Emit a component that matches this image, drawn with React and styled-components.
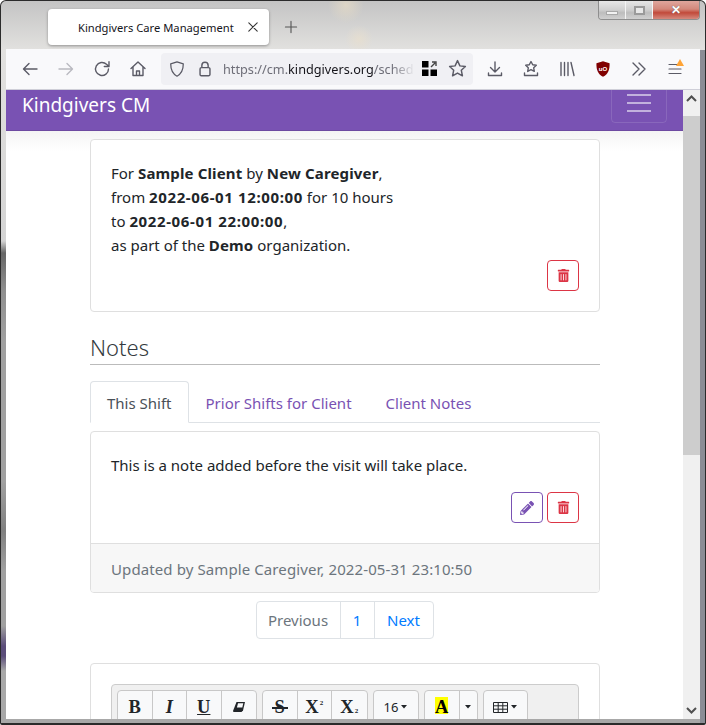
import React from 'react';
import styled, { createGlobalStyle } from 'styled-components';
import { FaTrashAlt, FaPencilAlt } from 'react-icons/fa';

const uiFont = `'Noto Sans', 'Open Sans', Arial, sans-serif`;

const GlobalStyle = createGlobalStyle`
  html, body {
    margin: 0;
    padding: 0;
    width: 706px;
    height: 725px;
    overflow: hidden;
    background: #fff;
  }
  * {
    box-sizing: border-box;
  }
`;

function Ico({ size = 20, children }) {
  return (
    <svg
      width={size}
      height={size}
      viewBox="0 0 20 20"
      fill="none"
      stroke="#5b5b66"
      strokeWidth="1.4"
      strokeLinecap="round"
      strokeLinejoin="round"
    >
      {children}
    </svg>
  );
}

function Caret() {
  return (
    <svg width="6" height="4" viewBox="0 0 6 4">
      <path d="M0 0h6L3 3.500z" fill="#212529" />
    </svg>
  );
}

function TableIcon() {
  return (
    <svg width="15" height="11" viewBox="0 0 15 11" fill="none" stroke="#212529">
      <path d="M.5.500h14v10H.5zM.5 3.800h14M.5 7.200h14M5.200.500v10M9.800.500v10" />
    </svg>
  );
}

function EraserIcon() {
  return (
    <svg width="12" height="10" viewBox="0 0 12 10">
      <path d="M3.500 0H12L10 8.500 8.500 10H0.500L0 9z" fill="#212529" />
      <path d="M5 1.300h5.300L9.300 5.600H3.900z" fill="#f8f9fa" />
    </svg>
  );
}

function NoteCard({ children, canEdit, footer }) {
  return (
    <Card>
      <CardBody>
        {children}
        <ActionRow>
          {canEdit && (
            <IconButton $color="#7952b3">
              <FaPencilAlt size={14} />
            </IconButton>
          )}
          <IconButton $color="#dc3545">
            <FaTrashAlt size={13} />
          </IconButton>
        </ActionRow>
      </CardBody>
      {footer && <CardFooter>{footer}</CardFooter>}
    </Card>
  );
}

export default function App() {
  return (
    <Window>
      <GlobalStyle />
      <TitleBar>
        <Tab>
          <TabTitle>Kindgivers Care Management</TabTitle>
          <Ico size={12}>
            <path d="M3 3l14 14M17 3L3 17" strokeWidth="1.800" stroke="#333" />
          </Ico>
        </Tab>
        <NewTab>
          <Ico size={14}>
            <path d="M10 2v16M2 10h16" stroke="#555" strokeWidth="1.600" />
          </Ico>
        </NewTab>
        <WinControls>
          <WinButton $w={27}>
            <MinGlyph />
          </WinButton>
          <WinButton $w={27}>
            <MaxGlyph />
          </WinButton>
          <WinButton $w={46} $close>
            <CloseGlyph>✕</CloseGlyph>
          </WinButton>
        </WinControls>
      </TitleBar>

      <Toolbar>
        <NavCell>
          <Ico>
            <path d="M17 10H4M9 4.500L3.500 10 9 15.500" />
          </Ico>
        </NavCell>
        <NavCell>
          <Ico>
            <g stroke="#b9b9c0">
              <path d="M3 10h13M11 4.500l5.500 5.500-5.500 5.500" />
            </g>
          </Ico>
        </NavCell>
        <NavCell>
          <Ico>
            <path d="M16.500 10a6.500 6.500 0 1 1-2-4.700L17 7.500M17 2.800v4.700h-4.700" />
          </Ico>
        </NavCell>
        <NavCell>
          <Ico>
            <path d="M3 9.500L10 3l7 6.500M5 8v8.500h10V8M8.500 16.500V12h3v4.500" />
          </Ico>
        </NavCell>
        <UrlBar>
          <UrlIcon>
            <Ico size={18}>
              <path d="M10 2l7 2.300c0 6.500-1.700 11-7 13.700-5.300-2.700-7-7.200-7-13.700z" />
            </Ico>
          </UrlIcon>
          <UrlIcon $flush>
            <Ico size={18}>
              <path d="M4.500 10a1.500 1.500 0 0 1 1.500-1.500h8a1.500 1.500 0 0 1 1.500 1.500v6a1.500 1.500 0 0 1-1.500 1.500H6A1.500 1.500 0 0 1 4.500 16zM6.500 8.500V6a3.500 3.500 0 0 1 7 0v2.500" strokeWidth="1.600" />
            </Ico>
          </UrlIcon>
          <UrlText>
            https://cm.<b>kindgivers.org</b>/sched
          </UrlText>
          <QrIcon>
            <svg width="15" height="15" viewBox="0 0 15 15">
              <path d="M0 0h6.500v6.500H0zM0 8.500h6.500V15H0zM8.500 8.500H15V15H8.500z" fill="#000" />
              <path d="M9 6l4-4M10 1h4v4" fill="none" stroke="#444" strokeWidth="1.400" />
            </svg>
          </QrIcon>
          <StarCell>
            <Ico size={21}>
              <path d="M10 2.500l2.300 5 5.200.600-3.900 3.500 1.100 5.400-4.700-2.700-4.700 2.700 1.100-5.400L2.500 8.100l5.200-.600z" />
            </Ico>
          </StarCell>
        </UrlBar>
        <RightIcons>
          <NavCell>
            <Ico>
              <path d="M10 3v10M5.500 8.500L10 13l4.500-4.500M3.500 14v2.500h13V14" />
            </Ico>
          </NavCell>
          <NavCell>
            <Ico>
              <path d="M10 2.500l1.700 3.300 3.600.500-2.600 2.500.6 3.600-3.300-1.700-3.300 1.700.6-3.600-2.600-2.500 3.600-.500zM3.500 14v2.500h13V14" />
            </Ico>
          </NavCell>
          <NavCell>
            <Ico>
              <path d="M4 3.500v13M7.500 3.500v13M11 3.500v13M14 3.500l3 13" />
            </Ico>
          </NavCell>
          <NavCell>
            <svg width="14" height="16" viewBox="0 0 16 18">
              <path d="M8 0l7.500 2.300c.3 7-1.500 12.500-7.500 15.500C2 14.800.2 9.300.5 2.300z" fill="#800000" />
              <text x="8" y="11" fontSize="7" fontWeight="700" fill="#fff" textAnchor="middle" fontFamily="Liberation Sans, sans-serif">uO</text>
            </svg>
          </NavCell>
          <NavCell>
            <Ico>
              <path d="M4 4l6 6-6 6M10 4l6 6-6 6" />
            </Ico>
          </NavCell>
          <NavCell>
            <MenuWrap>
              <Ico>
                <path d="M4 5.500h12M4 10h12M4 14.500h12" strokeWidth="1.200" />
              </Ico>
              <MenuBadge />
            </MenuWrap>
          </NavCell>
        </RightIcons>
      </Toolbar>

      <Viewport>
        <Page>
          <Navbar>
            <Brand>Kindgivers CM</Brand>
            <Toggler>
              <TogglerBar />
              <TogglerBar />
              <TogglerBar />
            </Toggler>
          </Navbar>
          <NavShadow />
          <Container>
            <NoteCard>
              <SummaryLine>
                For <b>Sample Client</b> by <b>New Caregiver</b>,
              </SummaryLine>
              <SummaryLine>
                from <DateText>2022-06-01 12:00:00</DateText> for 10 hours
              </SummaryLine>
              <SummaryLine>
                to <DateText>2022-06-01 22:00:00</DateText>,
              </SummaryLine>
              <SummaryLine>
                as part of the <b>Demo</b> organization.
              </SummaryLine>
            </NoteCard>

            <Heading>Notes</Heading>

            <Tabs>
              <TabLink $active>This Shift</TabLink>
              <TabLink>Prior Shifts for Client</TabLink>
              <TabLink>Client Notes</TabLink>
            </Tabs>

            <NoteCard canEdit footer="Updated by Sample Caregiver, 2022-05-31 23:10:50">
              <NoteText>This is a note added before the visit will take place.</NoteText>
            </NoteCard>

            <Pagination>
              <PageLink $w={85} $disabled>Previous</PageLink>
              <PageLink $w={35}>1</PageLink>
              <PageLink $w={60}>Next</PageLink>
            </Pagination>

            <EditorCard>
              <EditorToolbar>
                <BtnGroup>
                  <EdButton $bold>B</EdButton>
                  <EdButton $bold $italic>I</EdButton>
                  <EdButton $bold $underline>U</EdButton>
                  <EdButton><EraserIcon /></EdButton>
                </BtnGroup>
                <BtnGroup>
                  <EdButton $bold><StrikeS>S</StrikeS></EdButton>
                  <EdButton $bold>X<Mini>2</Mini></EdButton>
                  <EdButton $bold>X<MiniSub>2</MiniSub></EdButton>
                </BtnGroup>
                <BtnGroup>
                  <EdButton $w={44} $plain>16 <Caret /></EdButton>
                </BtnGroup>
                <BtnGroup>
                  <EdButton $bold $w={35}><Highlight>A</Highlight></EdButton>
                  <EdButton $w={17} $plain><Caret /></EdButton>
                </BtnGroup>
                <BtnGroup>
                  <EdButton $w={43} $plain><TableIcon /><Caret /></EdButton>
                </BtnGroup>
              </EditorToolbar>
            </EditorCard>
          </Container>
        </Page>
        <Scrollbar>
          <ScrollArrow>
            <svg width="11" height="7" viewBox="0 0 11 7" fill="none" stroke="#505050" strokeWidth="2">
              <path d="M1 6l4.500-4.500L10 6" />
            </svg>
          </ScrollArrow>
          <ScrollThumb />
          <ScrollTrack />
          <ScrollArrow>
            <svg width="11" height="7" viewBox="0 0 11 7" fill="none" stroke="#505050" strokeWidth="2">
              <path d="M1 1l4.500 4.500L10 1" />
            </svg>
          </ScrollArrow>
        </Scrollbar>
      </Viewport>
    </Window>
  );
}

const Window = styled.div`
  width: 706px;
  height: 725px;
  display: flex;
  flex-direction: column;
  padding: 0 5px 4px;
  border: 1px solid #2b2b2b;
  border-bottom-width: 2px;
  border-radius: 6px 6px 2px 2px;
  overflow: hidden;
  font-family: ${uiFont};
  background:
    linear-gradient(#8b8d95, #8b8d95) right top 49px / 5px 100% no-repeat,
    radial-gradient(circle at 345px 4px, rgba(231, 220, 198, 0.7) 0, rgba(231, 220, 198, 0) 18px),
    radial-gradient(circle at 358px 38px, rgba(233, 223, 205, 0.7) 0, rgba(233, 223, 205, 0) 14px),
    linear-gradient(
      180deg,
      #c4c4c4 0,
      #e2e1df 49px,
      #d4d4d4 240px,
      #666 252px,
      #8f8f8f 290px,
      #a0a0a0 340px,
      #a0a0a0 480px,
      #808080 530px,
      #a0a0a0 570px,
      #a0a0a0 625px,
      #5b4d7a 645px,
      #5b4d7a 655px,
      #a8a8a8 670px,
      #a8a8a8 100%
    );
`;

const TitleBar = styled.div`
  height: 48px;
  flex: none;
  display: flex;
  padding-left: 42px;
`;

const Tab = styled.div`
  width: 221px;
  height: 36px;
  margin-top: 8px;
  display: flex;
  align-items: center;
  padding: 0 10px 0 30px;
  background: #fff;
  border-radius: 4px;
  box-shadow: 0 1px 3px rgba(0, 0, 0, 0.35);
`;

const TabTitle = styled.span`
  flex: 1;
  font-size: 11.2px;
  color: #15141a;
  white-space: nowrap;
`;

const NewTab = styled.div`
  width: 44px;
  height: 36px;
  margin-top: 8px;
  display: flex;
  align-items: center;
  justify-content: center;
`;

const WinControls = styled.div`
  margin-left: auto;
  height: 19px;
  display: flex;
  border: 1px solid #8e8e8e;
  border-top: none;
  border-radius: 0 0 4px 4px;
  overflow: hidden;
`;

const WinButton = styled.div`
  width: ${p => p.$w}px;
  display: flex;
  align-items: center;
  justify-content: center;
  border-right: 1px solid #f4f4f4;
  background: ${p =>
    p.$close
      ? 'linear-gradient(180deg, #dfa69d 0, #d3887b 45%, #c24a3b 65%, #d5897d 100%)'
      : 'linear-gradient(180deg, #e6e6e6 0, #cfcfcf 50%, #bdbdbd 65%, #d0d0d0 100%)'};

  &:last-child {
    border-right: none;
  }
`;

const MinGlyph = styled.div`
  width: 12px;
  height: 4px;
  margin-top: 5px;
  background: #f2f2f2;
  border: 1px solid #a8a8a8;
`;

const MaxGlyph = styled.div`
  width: 11px;
  height: 9px;
  background: #e8e8e8;
  border: 2px solid #9a9a9a;
`;

const CloseGlyph = styled.span`
  font-size: 12px;
  font-weight: 700;
  line-height: 1;
  color: #fff;
  text-shadow: 0 0 1px #555;
`;

const Toolbar = styled.div`
  height: 41px;
  flex: none;
  display: flex;
  align-items: center;
  padding: 0 0 1px 6px;
  background: #f9f9fb;
  border-bottom: 1px solid #cfcfd8;
`;

const NavCell = styled.div`
  width: 36px;
  height: 32px;
  flex: none;
  display: flex;
  align-items: center;
  justify-content: center;
`;

const UrlBar = styled.div`
  width: 312px;
  height: 32px;
  margin-left: 5px;
  display: flex;
  align-items: center;
  background: #f0f0f4;
  border-radius: 4px;
`;

const UrlIcon = styled.div`
  width: 28px;
  height: 32px;
  flex: none;
  display: flex;
  align-items: center;
  justify-content: center;
  margin-left: ${p => (p.$flush ? 0 : 2)}px;
`;

const UrlText = styled.div`
  width: 192px;
  flex: none;
  margin-left: 4px;
  white-space: nowrap;
  font-size: 12.7px;
  color: #6e6e78;
  -webkit-mask-image: linear-gradient(90deg, #000 88%, transparent 100%);
  mask-image: linear-gradient(90deg, #000 88%, transparent 100%);

  b {
    font-weight: 400;
    color: #15141a;
  }
`;

const QrIcon = styled.div`
  width: 15px;
  margin-left: 7px;
  display: flex;
`;

const StarCell = styled.div`
  flex: 1;
  display: flex;
  justify-content: center;
  padding-left: 4px;
`;

const RightIcons = styled.div`
  display: flex;
  margin-left: 4px;
`;

const MenuWrap = styled.div`
  position: relative;
  display: flex;
`;

const MenuBadge = styled.div`
  position: absolute;
  top: 0;
  right: 1px;
  width: 0;
  height: 0;
  border-left: 4px solid transparent;
  border-right: 4px solid transparent;
  border-bottom: 7px solid #ffa436;
`;

const Viewport = styled.div`
  flex: 1;
  min-height: 0;
  display: flex;
  background: #fff;
`;

const Page = styled.div`
  width: 677px;
  overflow: hidden;
  color: #212529;
  font-size: 15px;
  line-height: 24px;
`;

const Navbar = styled.div`
  height: 41px;
  display: flex;
  justify-content: space-between;
  align-items: flex-end;
  padding: 0 16px 7px;
  overflow: hidden;
  background: #7952b3;
  border-bottom: 1px solid #6d4aa1;
`;

const Brand = styled.div`
  font-size: 19px;
  line-height: 30px;
  margin-bottom: 3px;
  color: #fff;
  white-space: nowrap;
`;

const Toggler = styled.div`
  width: 56px;
  height: 46px;
  flex: none;
  display: flex;
  flex-direction: column;
  justify-content: flex-end;
  gap: 6px;
  padding: 0 15px 10px;
  border: 1px solid rgba(255, 255, 255, 0.12);
  border-radius: 4px;
`;

const TogglerBar = styled.div`
  height: 2px;
  background: rgba(255, 255, 255, 0.55);
`;

const NavShadow = styled.div`
  height: 20px;
  margin-bottom: -20px;
  background: linear-gradient(180deg, #f4f4f4, #fff);
`;

const Container = styled.div`
  position: relative;
  width: 510px;
  margin-left: 84px;
  padding-top: 8px;
`;

const Card = styled.div`
  background: #fff;
  border: 1px solid #dfdfdf;
  border-radius: 4px;
  overflow: hidden;
`;

const CardBody = styled.div`
  padding: 21px 20px 20px;
`;

const SummaryLine = styled.div`
  white-space: nowrap;

  b {
    font-weight: 700;
    letter-spacing: 0.15px;
  }
`;

const DateText = styled.b`
  && {
    font-weight: 700;
    letter-spacing: 0.62px;
  }
`;

const NoteText = styled(SummaryLine)`
  margin-bottom: 15px;
`;

const ActionRow = styled.div`
  display: flex;
  justify-content: flex-end;
  gap: 4px;
  margin-top: 3px;
`;

const IconButton = styled.div`
  width: 32px;
  height: 31px;
  display: flex;
  align-items: center;
  justify-content: center;
  color: ${p => p.$color};
  border: 1px solid ${p => p.$color};
  border-radius: 4px;
`;

const CardFooter = styled.div`
  height: 49px;
  padding: 13px 20px 0;
  color: #6c757d;
  background: #f7f7f7;
  border-top: 1px solid #dfdfdf;
  letter-spacing: 0.1px;
  white-space: nowrap;
`;

const Heading = styled.div`
  margin-top: 20px;
  height: 33px;
  font-size: 22px;
  font-weight: 300;
  line-height: 30px;
  color: #343a40;
  border-bottom: 1px solid #bbb;
`;

const Tabs = styled.div`
  display: flex;
  margin-top: 16px;
  margin-bottom: 8px;
  height: 42px;
  border-bottom: 1px solid #dee2e6;
`;

const TabLink = styled.div`
  height: 42px;
  padding: 9px 16px 0;
  white-space: nowrap;
  color: ${p => (p.$active ? '#495057' : '#7952b3')};
  border: 1px solid ${p => (p.$active ? '#dee2e6' : 'transparent')};
  border-bottom-color: ${p => (p.$active ? '#fff' : 'transparent')};
  border-radius: 4px 4px 0 0;
  background: ${p => (p.$active ? '#fff' : 'transparent')};
`;

const Pagination = styled.div`
  display: flex;
  justify-content: center;
  margin-top: 8px;
  margin-bottom: 24px;
`;

const PageLink = styled.div`
  width: ${p => p.$w}px;
  height: 38px;
  display: flex;
  align-items: center;
  justify-content: center;
  margin-left: -1px;
  color: ${p => (p.$disabled ? '#6c757d' : '#007bff')};
  border: 1px solid #dee2e6;

  &:first-child {
    border-radius: 4px 0 0 4px;
  }
  &:last-child {
    border-radius: 0 4px 4px 0;
  }
`;

const EditorCard = styled(Card)`
  padding: 20px;
  height: 120px;
`;

const EditorToolbar = styled.div`
  display: flex;
  gap: 5px;
  height: 80px;
  padding: 5px 5px 0;
  background: #f0f0f0;
  border: 1px solid #ccc;
  border-radius: 4px;
`;

const BtnGroup = styled.div`
  display: flex;
  height: 34px;
  background: #f8f9fa;
  border: 1px solid #c8c8c8;
  border-radius: 4px;
`;

const EdButton = styled.div`
  width: ${p => p.$w || 34.5}px;
  display: flex;
  align-items: center;
  justify-content: center;
  gap: 3px;
  font-family: ${p => (p.$plain ? uiFont : `'Liberation Serif', serif`)};
  font-size: ${p => (p.$plain ? '13px' : '18.5px')};
  font-weight: ${p => (p.$bold ? 700 : 400)};
  font-style: ${p => (p.$italic ? 'italic' : 'normal')};
  text-decoration: ${p => (p.$underline ? 'underline' : 'none')};
  color: #212529;
  border-right: 1px solid #c8c8c8;

  &:last-child {
    border-right: none;
  }
`;

const StrikeS = styled.span`
  position: relative;
  display: block;

  &::after {
    content: '';
    position: absolute;
    left: -3px;
    right: -3px;
    top: 50%;
    height: 1.5px;
    background: #212529;
  }
`;

const Mini = styled.span`
  font-size: 7px;
  margin-left: -2px;
  margin-bottom: 8px;
`;

const MiniSub = styled.span`
  font-size: 7px;
  margin-left: -2px;
  margin-top: 8px;
`;

const Highlight = styled.span`
  display: block;
  width: 13px;
  height: 17px;
  line-height: 20px;
  margin-bottom: 3px;
  text-align: center;
  font-size: 18.5px;
  color: #000;
  background: #ff0;
`;

const Scrollbar = styled.div`
  width: 17px;
  flex: none;
  display: flex;
  flex-direction: column;
  background: #f0f0f0;
`;

const ScrollArrow = styled.div`
  height: 17px;
  flex: none;
  display: flex;
  align-items: center;
  justify-content: center;
`;

const ScrollThumb = styled.div`
  height: 339px;
  margin-top: 9px;
  background: #cdcdcd;
`;

const ScrollTrack = styled.div`
  flex: 1;
`;
